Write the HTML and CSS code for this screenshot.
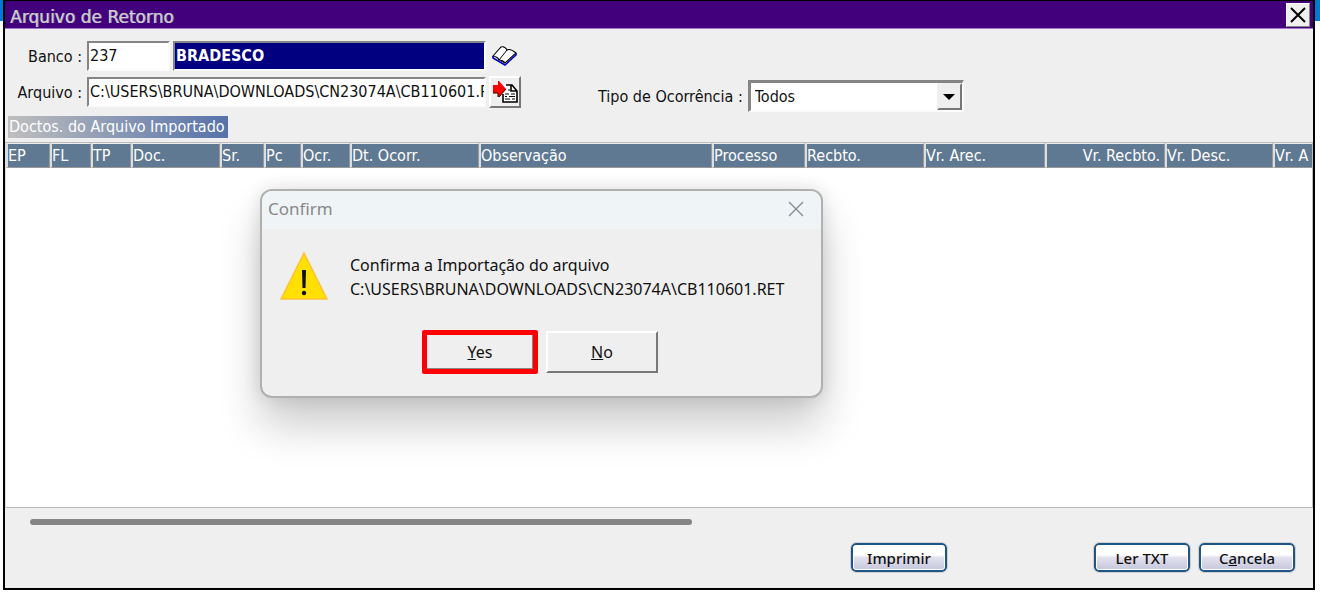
FILE: index.html
```html
<!DOCTYPE html>
<html lang="pt-BR">
<head>
<meta charset="utf-8">
<meta name="viewport" content="width=device-width, initial-scale=1">
<title>Arquivo de Retorno</title>
<link rel="stylesheet" href="styles.css">
</head>
<body>
<div class="desktop">
  <span class="strip strip-left"></span>
  <main class="window">
    <header class="titlebar">
      <h1 class="title">Arquivo de Retorno</h1>
      <button class="close" type="button" aria-label="Fechar">
        <svg width="18" height="16" viewBox="0 0 18 16"><path d="M2 1L16 15M16 1L2 15" stroke="#000" stroke-width="2"/></svg>
      </button>
    </header>

    <form class="form">
      <div class="fields">
        <label class="label" for="banco">Banco :</label>
        <div class="pair">
          <input class="field code" id="banco" type="text" value="237">
          <input class="field bank" type="text" value="BRADESCO" aria-label="Nome do banco" readonly>
        </div>
        <button class="book" type="button" aria-label="Consultar banco">
          <svg width="26" height="22" viewBox="0 0 26 22">
            <path d="M1 11V13L13 20L24 10V8" fill="none" stroke="#0000c8" stroke-width="1.600"/>
            <path d="M1 11L9 2Q13 1 15 5Q18 3 24 8L13 18Q11 15 7 15Q6 12 1 11Z" fill="#fff" stroke="#000" stroke-width="1.1"/>
            <path d="M15 5L7 15M9 16L13 18" fill="none" stroke="#000" stroke-width="1"/>
          </svg>
        </button>
        <label class="label" for="arquivo">Arquivo :</label>
        <input class="field" id="arquivo" type="text" value="C:\USERS\BRUNA\DOWNLOADS\CN23074A\CB110601.RET">
        <button class="load" type="button" aria-label="Abrir arquivo">
          <svg width="25" height="24" viewBox="0 0 25 24">
            <path d="M9 5H19L24 11V22H10Z" fill="#fff"/>
            <path d="M13 5H19L24 11V22H10V14M18 5V11H24" fill="none" stroke="#000" stroke-width="1.600"/>
            <path d="M15 10H17M12 14H16M18 14H22M12 16.500H14M16 16.500H22M12 19H17M19 19H22" stroke="#000" stroke-width="1.1"/>
            <path d="M0 5H5V1H6L13 9L6 17H5V13H0Z" fill="#f00"/>
            <path d="M0 13H5V17M6 17L13 9" fill="none" stroke="#300" stroke-width="1"/>
          </svg>
        </button>
      </div>
      <div class="type">
        <label class="label" for="tipo">Tipo de Ocorrência :</label>
        <div class="select-box">
          <select class="select" id="tipo"><option>Todos</option></select>
          <span class="arrow"><svg width="12" height="6" viewBox="0 0 12 6"><path d="M0 0H12L6 6Z"/></svg></span>
        </div>
      </div>
    </form>

    <section class="list">
      <h2 class="caption">Doctos. do Arquivo Importado</h2>
      <div class="grid">
        <table class="table">
          <colgroup>
            <col class="w44"><col class="w41"><col class="w40"><col class="w89"><col class="w44"><col class="w37"><col class="w49"><col class="w129"><col class="w233"><col class="w93"><col class="w119"><col class="w121"><col class="w120"><col class="w108"><col class="w40">
          </colgroup>
          <thead>
            <tr><th>EP</th><th>FL</th><th>TP</th><th>Doc.</th><th>Sr.</th><th>Pc</th><th>Ocr.</th><th>Dt. Ocorr.</th><th>Observação</th><th>Processo</th><th>Recbto.</th><th>Vr. Arec.</th><th class="right">Vr. Recbto.</th><th>Vr. Desc.</th><th>Vr. A</th></tr>
          </thead>
        </table>
      </div>
    </section>

    <div class="track"><div class="thumb"></div></div>

    <footer class="actions">
      <button class="action print" type="button">Imprimir</button>
      <button class="action" type="button">Ler TXT</button>
      <button class="action" type="button">C<u>a</u>ncela</button>
    </footer>
  </main>
  <span class="strip strip-right"></span>

  <section class="dialog" role="dialog" aria-labelledby="dialog-title">
    <header class="dialog-head">
      <h2 class="dialog-title" id="dialog-title">Confirm</h2>
      <button class="dialog-close" type="button" aria-label="Close">
        <svg width="16" height="16" viewBox="0 0 16 16"><path d="M1 1L15 15M15 1L1 15" stroke="#858b8e" stroke-width="1.4"/></svg>
      </button>
    </header>
    <div class="message">
      <svg class="warning" width="50" height="50" viewBox="0 0 50 50">
        <path d="M25 2L48 48H2Z" fill="#ffe000" stroke="#fdc23c" stroke-width="1.500"/>
        <path d="M23 19H27L26.500 37H23.500Z" fill="#111"/><circle cx="25" cy="42" r="2.200" fill="#111"/>
      </svg>
      <p class="text">Confirma a Importação do arquivo<br>C:\USERS\BRUNA\DOWNLOADS\CN23074A\CB110601.RET</p>
    </div>
    <div class="choices">
      <button class="choice yes" type="button"><u>Y</u>es</button>
      <button class="choice" type="button"><u>N</u>o</button>
    </div>
  </section>
</div>
</body>
</html>
```
FILE: styles.css
```css
* { box-sizing: border-box; }
body {
  margin: 0;
  background: #fff;
  color: #111;
  font-family: "DejaVu Sans Condensed", "DejaVu Sans", sans-serif;
  font-size: 16px;
}
button, input, select { font: inherit; color: inherit; margin: 0; }
h1, h2, p { margin: 0; font-weight: 400; }
button { padding: 0; }

.desktop { position: relative; display: flex; min-height: 100vh; padding-bottom: 4px; }
.strip { height: 21px; background: #0078d7; }
.strip-left { width: 3px; }
.strip-right { flex: 1; }
.window {
  flex: 0 0 calc(100% - 8px);
  min-width: 0;
  display: flex;
  flex-direction: column;
  border: 2px solid #000;
  border-top-width: 1px;
  background: #efefef;
}

.titlebar {
  display: flex;
  align-items: center;
  justify-content: space-between;
  height: 28px;
  padding: 0 3px 0 5px;
  background: #42007c;
  border-bottom: 1px solid #a878c8;
}
.title {
  padding-top: 5px;
  color: #d0d0d0;
  font-family: "DejaVu Sans", sans-serif;
  font-size: 17px;
  line-height: 24px;
  text-shadow: 1px 0 0 #8a7fa8;
}
.close {
  display: grid;
  place-items: center;
  width: 24px;
  height: 24px;
  border: 1px solid #fff;
  border-right-color: #888;
  border-bottom-color: #888;
  background: #efefef;
}

.form { display: flex; gap: 77px; padding: 12px 10px 4px 6px; }
.fields { display: grid; grid-template-columns: 73px 399px 32px; column-gap: 3px; row-gap: 5px; align-items: center; align-content: start; }
.label { text-align: right; white-space: nowrap; line-height: 24px; padding-top: 2px; }
.fields .label { padding-right: 2px; }
.pair { display: flex; gap: 3px; }
.field {
  width: 100%;
  height: 30px;
  min-width: 0;
  padding: 0 0 2px;
  border: 2px solid;
  border-color: #858585 #fbfbfb #fbfbfb #858585;
  border-radius: 0;
  background: #fff;
  outline: 0;
  text-indent: 1px;
}
.code { flex: 0 0 83px; }
.bank { background: #000080; color: #fff; font-weight: 700; }
.book { display: grid; place-items: center; width: 32px; height: 30px; border: 0; background: none; }
.load {
  display: grid;
  place-items: center;
  width: 32px;
  height: 32px;
  border: 2px solid;
  border-color: #fff #777 #777 #fff;
  background: #efefef;
}
.type { display: flex; gap: 5px; align-items: flex-start; padding-top: 39px; }
.type .label { padding-top: 5px; }
.select-box { position: relative; width: 216px; height: 32px; border: 2px solid; border-color: #858585 #fbfbfb #fbfbfb #858585; border-left-width: 3px; border-top-width: 3px; }
.select { display: block; width: 100%; height: 27px; padding: 0 30px 0 4px; border: 0; border-radius: 0; background: #fff; appearance: none; outline: 0; }
.arrow {
  position: absolute;
  top: 0;
  right: 0;
  display: grid;
  place-items: center;
  width: 25px;
  height: 27px;
  border: 2px solid;
  border-color: #efefef #777 #777 #efefef;
  background: #efefef;
  pointer-events: none;
}

.list { flex: 1; display: flex; flex-direction: column; align-items: flex-start; }
.caption {
  margin: 0 0 4px 3px;
  width: 220px;
  height: 22px;
  line-height: 22px;
  padding-left: 1px;
  font-size: 16px;
  white-space: nowrap;
  color: #fff;
  background: linear-gradient(90deg, #bebebe, #5672aa);
}
.grid {
  flex: 1;
  align-self: stretch;
  overflow: hidden;
  border: 1px solid #bbb;
  border-left-color: #ddd;
  background: #fff;
}
.table { width: 1307px; table-layout: fixed; border-collapse: separate; border-spacing: 0; }
.table th {
  height: 25px;
  padding: 0;
  border: 1px solid #999;
  border-width: 1px 1px 1px 2px;
  border-color: #eee #999 #999 #ddd;
  background: #607992;
  color: #fff;
  font-size: 16px;
  font-weight: 400;
  line-height: 22px;
  text-align: left;
  white-space: nowrap;
}
.table th.right { text-align: right; padding-right: 4px; }
.w37 { width: 37px; } .w40 { width: 40px; } .w41 { width: 41px; }
.w44 { width: 44px; } .w49 { width: 49px; } .w89 { width: 89px; }
.w93 { width: 93px; } .w108 { width: 108px; } .w119 { width: 119px; }
.w120 { width: 120px; } .w121 { width: 121px; } .w129 { width: 129px; }
.w233 { width: 233px; }

.track { padding: 11px 0 0 25px; }
.thumb { width: 51.6%; height: 6px; border-radius: 3px; background: #858585; }
.actions { display: flex; justify-content: flex-end; gap: 9px; padding: 18px 18px 16px; }
.action {
  width: 96px;
  height: 29px;
  border: 2px solid #1f5688;
  border-radius: 5px;
  outline: 1px solid #d0d0d0;
  background: linear-gradient(#fff 0 40%, #e2e2ef 50%, #c6c6dc);
  box-shadow: inset 0 0 0 1px #fff;
  font-family: "Noto Sans", sans-serif;
  font-size: 15px;
  font-weight: 500;
  line-height: 22px;
}
.print { margin-right: 138px; }

.dialog {
  position: absolute;
  top: 189px;
  left: 260px;
  width: 563px;
  border: 2px solid #b0b0b0;
  border-radius: 12px;
  overflow: hidden;
  background: #efefef;
  box-shadow: 0 28px 44px rgba(0, 0, 0, .2), 0 0 18px rgba(0, 0, 0, .12);
  font-family: "Noto Sans", sans-serif;
}
.dialog-head { display: flex; align-items: center; justify-content: space-between; height: 38px; padding: 0 17px 2px 6px; background: #eff4f7; }
.dialog-title { font-size: 17px; line-height: 22px; color: #888; }
.dialog-close { display: grid; border: 0; background: none; }
.message { display: flex; gap: 21px; padding: 22px 16px 0 17px; }
.text { padding-top: 2px; line-height: 24px; white-space: nowrap; }
.choices { display: flex; gap: 8px; padding: 29px 0 22px 160px; align-items: center; }
.choice { width: 112px; height: 42px; border: 2px solid; border-color: #fff #777 #777 #fff; background: #efefef; }
.yes { width: 116px; height: 44px; border: 5px solid #f00; border-radius: 2px; box-shadow: inset -1px -1px 0 #888; }
```
